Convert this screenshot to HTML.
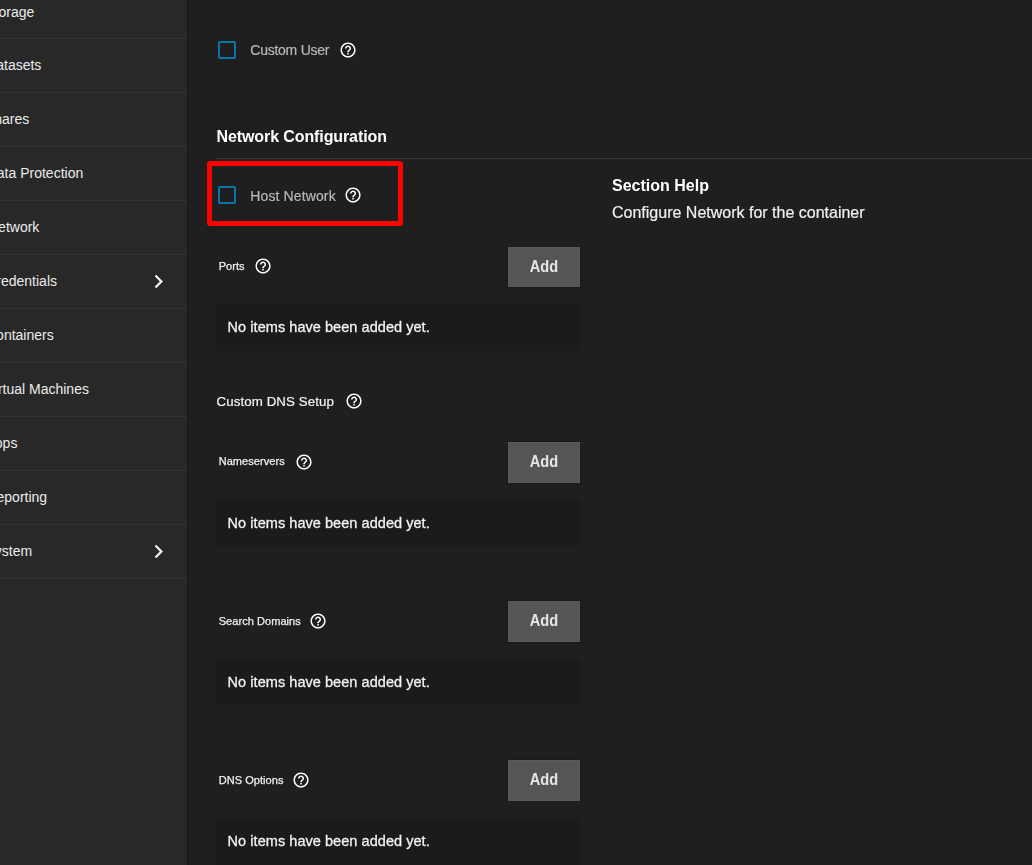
<!DOCTYPE html>
<html><head><meta charset="utf-8">
<style>
html,body{margin:0;padding:0;}
body{width:1032px;height:865px;overflow:hidden;position:relative;background:#1f1f1f;font-family:"Liberation Sans",sans-serif;}
.abs{position:absolute;white-space:nowrap;}
#side{position:absolute;left:0;top:0;width:187px;height:865px;background:#282828;}
#shadow{position:absolute;left:187px;top:0;width:2px;height:865px;background:linear-gradient(to right,#1a1a1a,#1c1c1c);}
.sep{position:absolute;left:0;width:187px;height:1px;background:#333333;}
.nav{position:absolute;white-space:nowrap;font-size:14px;color:#ececec;line-height:1;}
.chev{position:absolute;left:145px;width:27px;height:27px;}
.cb{position:absolute;left:218px;width:14px;height:14px;border:2px solid #0776aa;border-radius:2px;}
.lbl{position:absolute;white-space:nowrap;font-size:13.6px;color:#b8b8b8;line-height:1;}
.help{position:absolute;width:18.1px;height:18.1px;}
.small{position:absolute;white-space:nowrap;font-size:11px;color:#f0f0f0;line-height:1;letter-spacing:0.06px;-webkit-text-stroke:0.25px #f0f0f0;}
.btn{position:absolute;left:508px;width:70px;height:38px;background:#555555;border:1px solid #5b5b5b;box-shadow:0 0 0 1px #1a1a1a;}
.btn span{position:absolute;left:-1px;width:72px;text-align:center;top:10.3px;font-size:17px;font-weight:bold;color:#e6e6e6;line-height:1;transform:scaleX(0.86);}
.box{position:absolute;left:216px;width:364px;height:46px;background:#1b1b1b;}
.box span{position:absolute;white-space:nowrap;left:11.6px;top:16px;font-size:14.5px;color:#f2f2f2;line-height:1;letter-spacing:0.05px;-webkit-text-stroke:0.3px #f2f2f2;}
</style></head><body>
<div id="side">
  <div class="nav" style="left:-14.7px;top:4.5px">Storage</div>
  <div class="sep" style="top:38px"></div>
  <div class="nav" style="left:-13.9px;top:58px">Datasets</div>
  <div class="sep" style="top:92px"></div>
  <div class="nav" style="left:-15.1px;top:112px">Shares</div>
  <div class="sep" style="top:146px"></div>
  <div class="nav" style="left:-13.3px;top:166px">Data Protection</div>
  <div class="sep" style="top:200px"></div>
  <div class="nav" style="left:-12px;top:220px">Network</div>
  <div class="sep" style="top:254px"></div>
  <div class="nav" style="left:-13.8px;top:274px">Credentials</div>
  <svg class="chev" style="top:267.75px" viewBox="0 0 24 24"><path d="M10 6 8.59 7.41 13.17 12l-4.58 4.59L10 18l6-6z" fill="#f0f0f0"/></svg>
  <div class="sep" style="top:308px"></div>
  <div class="nav" style="left:-14px;top:328px">Containers</div>
  <div class="sep" style="top:362px"></div>
  <div class="nav" style="left:-14.3px;top:382px">Virtual Machines</div>
  <div class="sep" style="top:416px"></div>
  <div class="nav" style="left:-14.5px;top:436px">Apps</div>
  <div class="sep" style="top:470px"></div>
  <div class="nav" style="left:-13.6px;top:490px">Reporting</div>
  <div class="sep" style="top:524px"></div>
  <div class="nav" style="left:-14.6px;top:544px">System</div>
  <svg class="chev" style="top:537.75px" viewBox="0 0 24 24"><path d="M10 6 8.59 7.41 13.17 12l-4.58 4.59L10 18l6-6z" fill="#f0f0f0"/></svg>
  <div class="sep" style="top:578px"></div>
</div>
<div id="shadow"></div>
<div id="main" style="position:absolute;left:0;top:0;width:1032px;height:865px;will-change:transform">

<!-- Custom User -->
<div class="cb" style="top:41px"></div>
<div class="lbl" style="left:250.3px;top:43px;font-size:14px;letter-spacing:-0.25px;-webkit-text-stroke:0.2px #b8b8b8">Custom User</div>
<svg class="help" style="left:339.00px;top:40.85px" viewBox="0 0 24 24"><path d="M11 18h2v-2h-2v2zm1-16C6.48 2 2 6.48 2 12s4.48 10 10 10 10-4.48 10-10S17.52 2 12 2zm0 18c-4.41 0-8-3.59-8-8s3.59-8 8-8 8 3.59 8 8-3.59 8-8 8zm0-14c-2.21 0-4 1.79-4 4h2c0-1.1.9-2 2-2s2 .9 2 2c0 2-3 1.75-3 5h2c0-2.25 3-2.5 3-5 0-2.21-1.79-4-4-4z" fill="#fff"/></svg>

<!-- Network Configuration -->
<div class="abs" style="left:216.5px;top:128.5px;font-size:16px;font-weight:bold;color:#fff;line-height:1;letter-spacing:-0.1px">Network Configuration</div>
<div class="abs" style="left:216px;top:158px;width:816px;height:1px;background:#383838"></div>

<!-- red highlight -->
<div class="abs" style="left:207px;top:161px;width:186px;height:55px;border:5px solid #ff0000;border-radius:3px"></div>
<div class="cb" style="top:186px"></div>
<div class="lbl" style="left:250.3px;top:188.5px;font-size:14px;letter-spacing:0.12px;-webkit-text-stroke:0.2px #b8b8b8">Host Network</div>
<svg class="help" style="left:343.95px;top:185.75px" viewBox="0 0 24 24"><path d="M11 18h2v-2h-2v2zm1-16C6.48 2 2 6.48 2 12s4.48 10 10 10 10-4.48 10-10S17.52 2 12 2zm0 18c-4.41 0-8-3.59-8-8s3.59-8 8-8 8 3.59 8 8-3.59 8-8 8zm0-14c-2.21 0-4 1.79-4 4h2c0-1.1.9-2 2-2s2 .9 2 2c0 2-3 1.75-3 5h2c0-2.25 3-2.5 3-5 0-2.21-1.79-4-4-4z" fill="#fff"/></svg>

<!-- Section Help -->
<div class="abs" style="left:612px;top:178px;font-size:16px;font-weight:bold;color:#fff;line-height:1">Section Help</div>
<div class="abs" style="left:612px;top:205px;font-size:16px;color:#f0f0f0;line-height:1;-webkit-text-stroke:0.2px #f0f0f0">Configure Network for the container</div>

<!-- Ports -->
<div class="small" style="left:218.7px;top:261px">Ports</div>
<svg class="help" style="left:254.10px;top:257.00px" viewBox="0 0 24 24"><path d="M11 18h2v-2h-2v2zm1-16C6.48 2 2 6.48 2 12s4.48 10 10 10 10-4.48 10-10S17.52 2 12 2zm0 18c-4.41 0-8-3.59-8-8s3.59-8 8-8 8 3.59 8 8-3.59 8-8 8zm0-14c-2.21 0-4 1.79-4 4h2c0-1.1.9-2 2-2s2 .9 2 2c0 2-3 1.75-3 5h2c0-2.25 3-2.5 3-5 0-2.21-1.79-4-4-4z" fill="#fff"/></svg>
<div class="btn" style="top:247px"><span>Add</span></div>
<div class="box" style="top:304px;height:47px"><span style="top:16px">No items have been added yet.</span></div>

<!-- Custom DNS Setup -->
<div class="lbl" style="left:216.6px;top:395px;font-size:13.3px;color:#f4f4f4;letter-spacing:0.08px;-webkit-text-stroke:0.2px #f4f4f4">Custom DNS Setup</div>
<svg class="help" style="left:345.00px;top:391.85px" viewBox="0 0 24 24"><path d="M11 18h2v-2h-2v2zm1-16C6.48 2 2 6.48 2 12s4.48 10 10 10 10-4.48 10-10S17.52 2 12 2zm0 18c-4.41 0-8-3.59-8-8s3.59-8 8-8 8 3.59 8 8-3.59 8-8 8zm0-14c-2.21 0-4 1.79-4 4h2c0-1.1.9-2 2-2s2 .9 2 2c0 2-3 1.75-3 5h2c0-2.25 3-2.5 3-5 0-2.21-1.79-4-4-4z" fill="#fff"/></svg>

<!-- Nameservers -->
<div class="small" style="left:218.7px;top:456px">Nameservers</div>
<svg class="help" style="left:294.90px;top:452.95px" viewBox="0 0 24 24"><path d="M11 18h2v-2h-2v2zm1-16C6.48 2 2 6.48 2 12s4.48 10 10 10 10-4.48 10-10S17.52 2 12 2zm0 18c-4.41 0-8-3.59-8-8s3.59-8 8-8 8 3.59 8 8-3.59 8-8 8zm0-14c-2.21 0-4 1.79-4 4h2c0-1.1.9-2 2-2s2 .9 2 2c0 2-3 1.75-3 5h2c0-2.25 3-2.5 3-5 0-2.21-1.79-4-4-4z" fill="#fff"/></svg>
<div class="btn" style="top:442px;height:39px"><span>Add</span></div>
<div class="box" style="top:499px;height:47px"><span style="top:17px">No items have been added yet.</span></div>

<!-- Search Domains -->
<div class="small" style="left:218.7px;top:616px">Search Domains</div>
<svg class="help" style="left:308.95px;top:611.95px" viewBox="0 0 24 24"><path d="M11 18h2v-2h-2v2zm1-16C6.48 2 2 6.48 2 12s4.48 10 10 10 10-4.48 10-10S17.52 2 12 2zm0 18c-4.41 0-8-3.59-8-8s3.59-8 8-8 8 3.59 8 8-3.59 8-8 8zm0-14c-2.21 0-4 1.79-4 4h2c0-1.1.9-2 2-2s2 .9 2 2c0 2-3 1.75-3 5h2c0-2.25 3-2.5 3-5 0-2.21-1.79-4-4-4z" fill="#fff"/></svg>
<div class="btn" style="top:601px;height:39px"><span>Add</span></div>
<div class="box" style="top:659px;height:46px"><span style="top:16px">No items have been added yet.</span></div>

<!-- DNS Options -->
<div class="small" style="left:218.7px;top:775px">DNS Options</div>
<svg class="help" style="left:291.95px;top:770.95px" viewBox="0 0 24 24"><path d="M11 18h2v-2h-2v2zm1-16C6.48 2 2 6.48 2 12s4.48 10 10 10 10-4.48 10-10S17.52 2 12 2zm0 18c-4.41 0-8-3.59-8-8s3.59-8 8-8 8 3.59 8 8-3.59 8-8 8zm0-14c-2.21 0-4 1.79-4 4h2c0-1.1.9-2 2-2s2 .9 2 2c0 2-3 1.75-3 5h2c0-2.25 3-2.5 3-5 0-2.21-1.79-4-4-4z" fill="#fff"/></svg>
<div class="btn" style="top:760px;height:39px"><span>Add</span></div>
<div class="box" style="top:818px;height:47px"><span style="top:16px">No items have been added yet.</span></div>
</div>
</body></html>
